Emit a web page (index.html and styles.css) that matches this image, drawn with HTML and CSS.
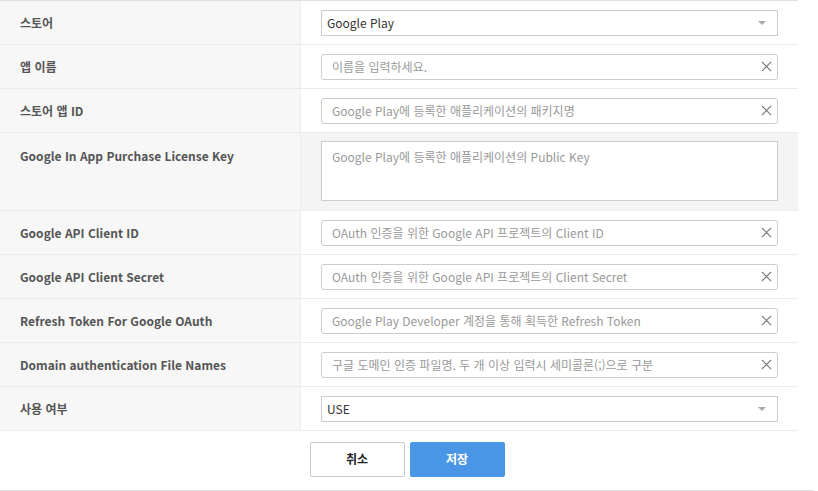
FILE: index.html
```html
<!DOCTYPE html>
<html lang="ko">
<head>
<meta charset="utf-8">
<link rel="stylesheet" href="styles.css">
</head>
<body>
<div class="form">
  <div class="row">
    <div class="label">스토어</div>
    <div class="value"><div class="select"><span>Google Play</span><i class="caret"></i></div></div>
  </div>
  <div class="row">
    <div class="label">앱 이름</div>
    <div class="value"><div class="input"><span class="ph">이름을 입력하세요.</span><svg class="x" viewBox="0 0 12 12"><path d="M1 1L11 11M11 1L1 11"/></svg></div></div>
  </div>
  <div class="row">
    <div class="label">스토어 앱 ID</div>
    <div class="value"><div class="input"><span class="ph">Google Play에 등록한 애플리케이션의 패키지명</span><svg class="x" viewBox="0 0 12 12"><path d="M1 1L11 11M11 1L1 11"/></svg></div></div>
  </div>
  <div class="row tall">
    <div class="label">Google In App Purchase License Key</div>
    <div class="value shaded"><div class="textarea"><span class="ph">Google Play에 등록한 애플리케이션의 Public Key</span></div></div>
  </div>
  <div class="row">
    <div class="label">Google API Client ID</div>
    <div class="value"><div class="input"><span class="ph">OAuth 인증을 위한 Google API 프로젝트의 Client ID</span><svg class="x" viewBox="0 0 12 12"><path d="M1 1L11 11M11 1L1 11"/></svg></div></div>
  </div>
  <div class="row">
    <div class="label">Google API Client Secret</div>
    <div class="value"><div class="input"><span class="ph">OAuth 인증을 위한 Google API 프로젝트의 Client Secret</span><svg class="x" viewBox="0 0 12 12"><path d="M1 1L11 11M11 1L1 11"/></svg></div></div>
  </div>
  <div class="row">
    <div class="label">Refresh Token For Google OAuth</div>
    <div class="value"><div class="input"><span class="ph">Google Play Developer 계정을 통해 획득한 Refresh Token</span><svg class="x" viewBox="0 0 12 12"><path d="M1 1L11 11M11 1L1 11"/></svg></div></div>
  </div>
  <div class="row">
    <div class="label">Domain authentication File Names</div>
    <div class="value"><div class="input"><span class="ph">구글 도메인 인증 파일명. 두 개 이상 입력시 세미콜론(;)으로 구분</span><svg class="x" viewBox="0 0 12 12"><path d="M1 1L11 11M11 1L1 11"/></svg></div></div>
  </div>
  <div class="row">
    <div class="label">사용 여부</div>
    <div class="value"><div class="select"><span>USE</span><i class="caret"></i></div></div>
  </div>
  <div class="footer">
    <button class="btn cancel">취소</button>
    <button class="btn save">저장</button>
  </div>
</div>
</body>
</html>
```
FILE: styles.css
```css
* { box-sizing: border-box; }
html, body { margin: 0; padding: 0; background: #fff; }
body {
  font-family: "Noto Sans CJK KR", "Noto Sans", sans-serif;
  font-size: 12px;
  color: #333;
}
.form {
  width: 798px;
  border-top: 1px solid #e0e0e0;
}
.row {
  display: grid;
  grid-template-columns: 301px 497px;
  height: 44px;
  border-bottom: 1px solid #ebebeb;
}
.row.tall { height: 78px; }
.label {
  background: #f7f7f7;
  border-right: 1px solid #ededed;
  padding-left: 20px;
  padding-bottom: 1px;
  font-weight: bold;
  color: #555;
  display: flex;
  align-items: center;
}
.row.tall .label { align-items: flex-start; padding-top: 14px; }
.value {
  padding: 9px 20px 0 20px;
}
.value.shaded { background: #f4f4f4; padding-top: 8px; }
.select, .input {
  height: 26px;
  width: 457px;
  border: 1px solid #cccccc;
  background: #fff;
  display: flex;
  align-items: center;
  justify-content: space-between;
  line-height: 1;
  padding-bottom: 1px;
}
.select { padding-left: 5px; padding-right: 11px; color: #333; }
.input { border-radius: 3px; padding-left: 10px; padding-right: 5px; }
.ph { color: #999; }
.caret {
  width: 0; height: 0;
  border-left: 4px solid transparent;
  border-right: 4px solid transparent;
  border-top: 4px solid #aaa;
  margin-top: 1px;
}
.x { width: 11px; height: 11px; }
.x path { stroke: #777; stroke-width: 1.3; fill: none; }
.textarea {
  width: 457px;
  height: 60px;
  border: 1px solid #cccccc;
  background: #fff;
  padding: 6px 10px;
}
.footer {
  width: 814px;
  height: 60px;
  display: flex;
  justify-content: center;
  align-items: flex-start;
  gap: 5px;
  padding-top: 11px;
  border-bottom: 1px solid #e0e0e0;
}
.btn {
  width: 95px;
  height: 35px;
  font-family: inherit;
  font-size: 12px;
  font-weight: bold;
  border-radius: 2px;
  padding: 0 0 2px;
  cursor: pointer;
}
.cancel { background: #fff; border: 1px solid #c8c8c8; color: #222; }
.save { background: #4a96e6; border: 1px solid #4a96e6; color: #fff; }
```
